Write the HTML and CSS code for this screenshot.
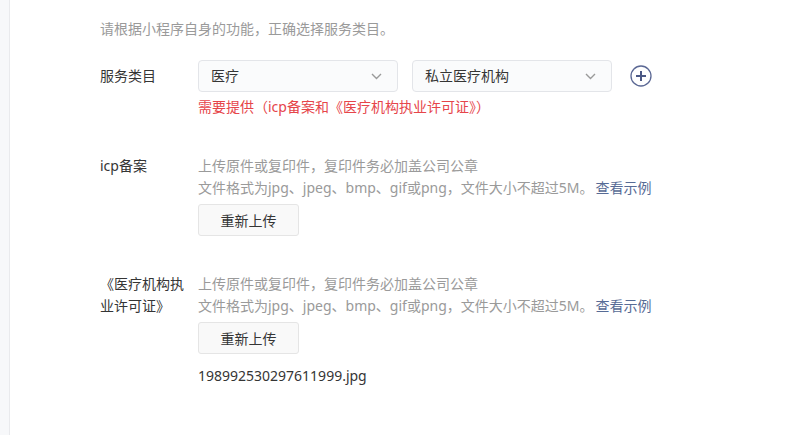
FILE: index.html
```html
<!DOCTYPE html>
<html lang="zh-CN">
<head>
<meta charset="utf-8">
<title>服务类目</title>
<link rel="stylesheet" href="styles.css">
</head>
<body>
<div class="page">
  <aside class="side"></aside>
  <main class="main">
    <p class="hint">请根据小程序自身的功能，正确选择服务类目。</p>

    <div class="row">
      <div class="label label-mid">服务类目</div>
      <div class="content">
        <div class="selects">
          <div class="select"><span>医疗</span><svg class="chev" width="11" height="7" viewBox="0 0 11 7"><path d="M1 1l4.5 4.5L10 1" fill="none" stroke="#9a9a9a" stroke-width="1.4"/></svg></div>
          <div class="select"><span>私立医疗机构</span><svg class="chev" width="11" height="7" viewBox="0 0 11 7"><path d="M1 1l4.5 4.5L10 1" fill="none" stroke="#9a9a9a" stroke-width="1.4"/></svg></div>
          <svg class="plus" width="22" height="22" viewBox="0 0 22 22"><circle cx="11" cy="11" r="10" fill="none" stroke="#5b6894" stroke-width="1.3"/><path d="M11 6v10M6 11h10" stroke="#4b5885" stroke-width="2"/></svg>
        </div>
        <p class="warn">需要提供（icp备案和《医疗机构执业许可证》）</p>
      </div>
    </div>

    <div class="row item">
      <div class="label">icp备案</div>
      <div class="content">
        <p class="desc">上传原件或复印件，复印件务必加盖公司公章</p>
        <p class="desc">文件格式为jpg、jpeg、bmp、gif或png，文件大小不超过5M。<a class="link">查看示例</a></p>
        <button class="btn">重新上传</button>
      </div>
    </div>

    <div class="row item">
      <div class="label">《医疗机构执业许可证》</div>
      <div class="content">
        <p class="desc">上传原件或复印件，复印件务必加盖公司公章</p>
        <p class="desc">文件格式为jpg、jpeg、bmp、gif或png，文件大小不超过5M。<a class="link">查看示例</a></p>
        <button class="btn">重新上传</button>
        <p class="file">198992530297611999.jpg</p>
      </div>
    </div>
  </main>
</div>
</body>
</html>
```

FILE: styles.css
```css
* { box-sizing: border-box; }
html, body { margin: 0; padding: 0; background: #fff; }
body {
  font-family: "Noto Sans", "Noto Sans CJK SC", sans-serif;
  font-size: 14px;
  color: #353535;
}
p { margin: 0; }
.page { display: flex; min-height: 435px; }
.side {
  width: 10px;
  flex: none;
  background: #f7f8fa;
  border-right: 1px solid #e9eaed;
}
.main { flex: 1; padding: 18px 0 0 90px; }
.hint { color: #9a9a9a; line-height: 22px; margin-bottom: 20px; }
.row { display: flex; }
.label { width: 98px; flex: none; padding-right: 12px; line-height: 22px; color: #353535; }
.label-mid { line-height: 32px; }
.content { flex: 1; }
.selects { display: flex; align-items: center; }
.select {
  width: 200px;
  height: 32px;
  margin-right: 14px;
  padding: 0 15px 0 12px;
  border: 1px solid #e3e5e9;
  border-radius: 4px;
  background: #fafbfc;
  display: flex;
  align-items: center;
  justify-content: space-between;
  line-height: 30px;
}
.plus { margin-left: 4px; flex: none; }
.warn { color: #e6454a; line-height: 22px; margin-top: 4px; }
.item { margin-top: 37px; }
.desc { color: #9a9a9a; line-height: 22px; }
.desc .link { margin-left: 2px; }
.link { color: #576b95; text-decoration: none; }
.btn {
  display: block;
  margin-top: 5px;
  width: 101px;
  height: 32px;
  border: 1px solid #e5e5e5;
  border-radius: 3px;
  background: #f9f9f9;
  font-family: inherit;
  font-size: 14px;
  color: #353535;
  padding: 0;
}
.file { margin-top: 11px; line-height: 22px; color: #353535; }
```
